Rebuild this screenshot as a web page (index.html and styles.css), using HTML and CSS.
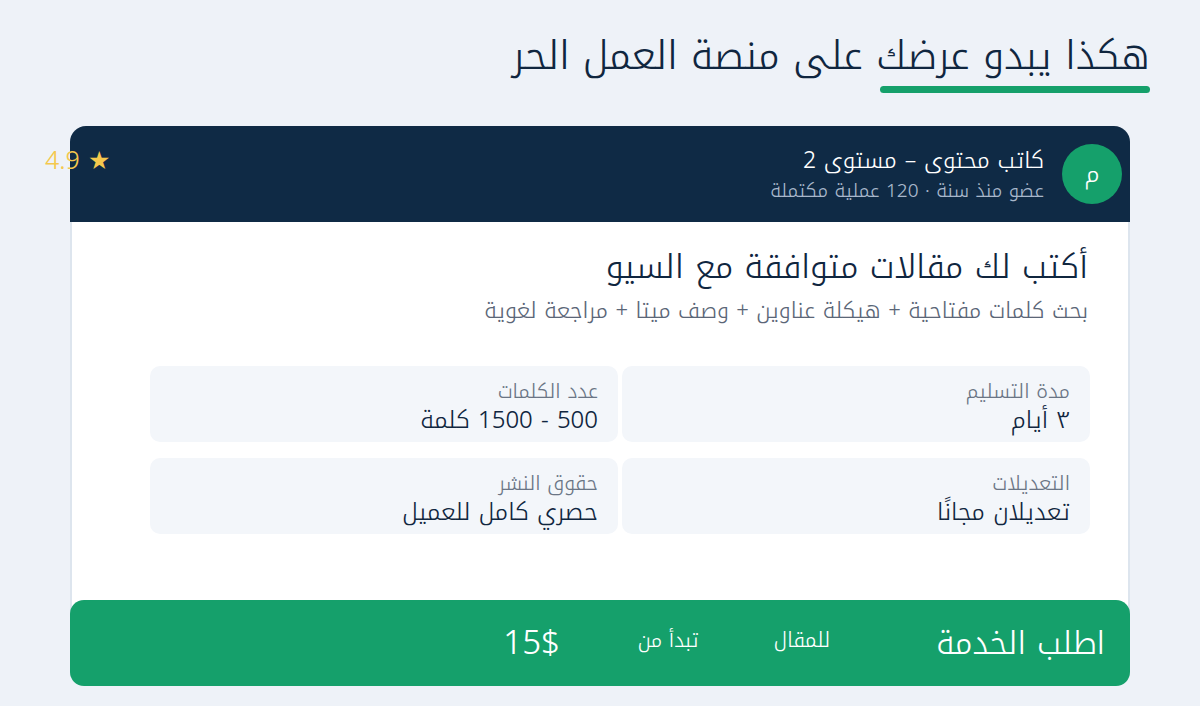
FILE: index.html
```html
<!DOCTYPE html>
<html lang="ar" dir="rtl">
<head>
  <meta charset="UTF-8" />
  <meta name="viewport" content="width=device-width, initial-scale=1.0" />
  <title>معاينة العرض</title>
  <link rel="stylesheet" href="styles.css">
</head>
<body>

  <div class="page">
    <h1 class="page-title">هكذا يبدو عرضك على منصة العمل الحر</h1>
    <div class="title-bar"></div>

    <div class="gig-card">
      <div class="gig-header">
        <div class="seller">
          <div class="avatar">م</div>
          <div class="seller-info">
            <div class="seller-name">كاتب محتوى – مستوى 2</div>
            <div class="seller-meta">عضو منذ سنة · 120 عملية مكتملة</div>
          </div>
        </div>
        <div class="rating">★ 4.9</div>
      </div>

      <div class="gig-body">
        <h2 class="gig-title">أكتب لك مقالات متوافقة مع السيو</h2>
        <p class="gig-desc">بحث كلمات مفتاحية + هيكلة عناوين + وصف ميتا + مراجعة لغوية</p>

        <div class="specs">
          <div class="spec">
            <span class="spec-label">مدة التسليم</span>
            <span class="spec-value">٣ أيام</span>
          </div>
          <div class="spec">
            <span class="spec-label">عدد الكلمات</span>
            <span class="spec-value">500 - 1500 كلمة</span>
          </div>
          <div class="spec">
            <span class="spec-label">التعديلات</span>
            <span class="spec-value">تعديلان مجانًا</span>
          </div>
          <div class="spec">
            <span class="spec-label">حقوق النشر</span>
            <span class="spec-value">حصري كامل للعميل</span>
          </div>
        </div>
      </div>

      <div class="gig-footer">
        <span class="order-btn">اطلب الخدمة</span>
        <span class="per-unit">للمقال</span>
        <span class="from">تبدأ من</span>
        <span class="price">15$</span>
      </div>
    </div>
  </div>

</body>
</html>
```

FILE: styles.css
```css
body {
  margin: 0;
  background: #eef2f8;
  font-family: 'Noto Kufi Arabic', 'Noto Sans', sans-serif;
  font-weight: 300;
  color: #10263f;
}

.page {
  padding: 26px 50px 0;
}

.page-title {
  margin: 0;
  font-size: 39.2px;
  font-weight: 300;
  line-height: 60px;
  color: #10263f;
}

.title-bar {
  width: 270px;
  height: 7px;
  border-radius: 4px;
  background: #15a06b;
}

.gig-card {
  margin: 33px 20px 0;
  background: #fff;
  border: 2px solid #dde5ee;
  border-top: none;
  border-bottom: none;
  border-radius: 16px;
}

.gig-header {
  display: flex;
  align-items: center;
  justify-content: space-between;
  height: 96px;
  margin: 0 -2px;
  padding-right: 8px;
  background: #0f2a45;
  border-radius: 16px 16px 0 0;
}

.seller {
  display: flex;
  align-items: center;
  gap: 18px;
}

.avatar {
  width: 60px;
  height: 60px;
  border-radius: 50%;
  background: #15a06b;
  color: #fff;
  font-size: 24px;
  line-height: 1;
  display: flex;
  align-items: center;
  justify-content: center;
}

.seller-info {
  padding-top: 4px;
}

.seller-name {
  color: #fff;
  font-size: 23px;
  line-height: 30px;
}

.seller-meta {
  color: #a8b7cb;
  font-size: 19px;
  line-height: 30px;
}

.rating {
  margin-left: -25px;
  margin-top: -26px;
  color: #f4c84d;
  font-size: 25px;
  line-height: 36px;
}

.gig-body {
  padding: 23px 38px 66px;
}

.gig-title {
  margin: 0 2px 0 0;
  font-size: 33px;
  font-weight: 300;
  line-height: 44px;
}

.gig-desc {
  margin: 6px 2px 0 0;
  font-size: 22px;
  line-height: 32px;
  color: #5b6677;
}

.specs {
  display: grid;
  grid-template-columns: 1fr 1fr;
  gap: 16px 4px;
  width: 940px;
  margin-top: 39px;
}

.spec {
  display: flex;
  flex-direction: column;
  padding: 11px 20px 0;
  height: 76px;
  box-sizing: border-box;
  background: #f3f6fa;
  border-radius: 10px;
}

.spec-label {
  font-size: 20px;
  line-height: 28px;
  color: #6a7585;
}

.spec-value {
  font-size: 24px;
  line-height: 30px;
  color: #10263f;
}

.gig-footer {
  display: flex;
  align-items: center;
  height: 86px;
  margin: 0 -2px;
  padding-right: 25px;
  background: #15a06b;
  border-radius: 14px;
  color: #fff;
}

.order-btn {
  font-size: 32px;
}

.per-unit {
  margin-right: 106px;
  margin-top: -6px;
  font-size: 20.5px;
}

.from {
  margin-right: 75px;
  margin-top: -6px;
  font-size: 20px;
}

.price {
  margin-right: 78px;
  font-size: 33px;
}
```
